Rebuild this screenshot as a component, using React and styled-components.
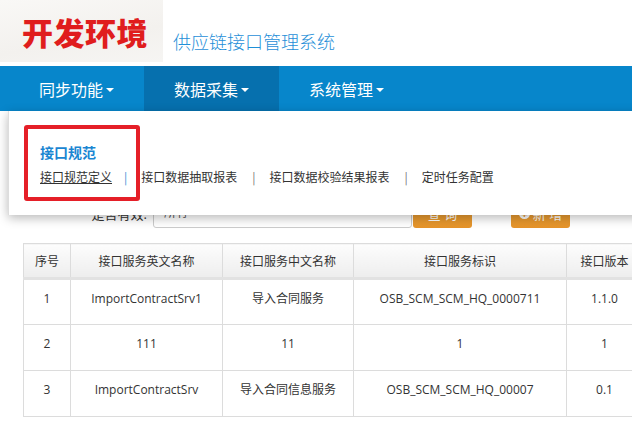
import React from "react";
import styled, { createGlobalStyle, css } from "styled-components";

const GlobalStyle = createGlobalStyle`
	html, body {
		margin: 0;
		padding: 0;
		background: #fff;
		overflow: hidden;
	}
	body {
		font-family: "Open Sans", "Noto Sans CJK SC", sans-serif;
		color: #333;
	}
`;

const navItems = [
	{ label: "同步功能", active: false },
	{ label: "数据采集", active: true },
	{ label: "系统管理", active: false },
];

const subLinks = ["接口规范定义", "接口数据抽取报表", "接口数据校验结果报表", "定时任务配置"];

const columns = [
	{ title: "序号", width: 47 },
	{ title: "接口服务英文名称", width: 152 },
	{ title: "接口服务中文名称", width: 131 },
	{ title: "接口服务标识", width: 213 },
	{ title: "接口版本", width: 76 },
];

const rows = [
	["1", "ImportContractSrv1", "导入合同服务", "OSB_SCM_SCM_HQ_0000711", "1.1.0"],
	["2", "111", "11", "1", "1"],
	["3", "ImportContractSrv", "导入合同信息服务", "OSB_SCM_SCM_HQ_00007", "0.1"],
];

const App = () => {
	return (
		<Page>
			<GlobalStyle />
			<Header>
				<Logo>开发环境</Logo>
				<SubTitle>供应链接口管理系统</SubTitle>
			</Header>
			<NavBar>
				{navItems.map((item) => (
					<NavItem key={item.label} active={item.active}>
						{item.label}
						<Caret />
					</NavItem>
				))}
			</NavBar>

			<Content>
				<SearchRow>
					<Label>是否有效:</Label>
					<Select>所有</Select>
					<OrangeButton>查 询</OrangeButton>
					<OrangeButton gap>
						<PlusIcon>+</PlusIcon>新 增
					</OrangeButton>
				</SearchRow>

				<Table>
					<colgroup>
						{columns.map((c) => (
							<col key={c.title} style={{ width: c.width }} />
						))}
					</colgroup>
					<thead>
						<tr>
							{columns.map((c) => (
								<Th key={c.title}>{c.title}</Th>
							))}
						</tr>
					</thead>
					<tbody>
						{rows.map((r) => (
							<tr key={r[0]}>
								{r.map((cell, idx) => (
									<Td key={idx}>{cell}</Td>
								))}
							</tr>
						))}
					</tbody>
				</Table>
			</Content>

			{/* 下拉菜单 (数据采集) */}
			<DropPanel>
				<GroupTitle>接口规范</GroupTitle>
				<LinkRow>
					{subLinks.map((text, idx) => (
						<React.Fragment key={text}>
							{idx > 0 && <Sep first={idx === 1}>|</Sep>}
							<SubLink current={idx === 0}>{text}</SubLink>
						</React.Fragment>
					))}
				</LinkRow>
			</DropPanel>
			<Highlight />
		</Page>
	);
};

export default App;

const Page = styled.div`
	position: relative;
	width: 632px;
	height: 445px;
	overflow: hidden;
`;

const Header = styled.header`
	height: 66px;
	display: flex;
	align-items: flex-start;
`;

const Logo = styled.div`
	width: 163px;
	height: 62px;
	box-sizing: border-box;
	padding: 12px 0 0 22px;
	background: linear-gradient(170deg, #f9f8f6 0%, #f3f1ee 60%, #f6f5f3 100%);
	color: #e01d1d;
	font-family: "Noto Sans CJK SC", sans-serif;
	font-weight: 900;
	font-size: 31px;
	line-height: 40px;
	letter-spacing: 0.5px;
`;

const SubTitle = styled.div`
	margin: 29px 0 0 10px;
	font-family: "Noto Sans CJK SC", sans-serif;
	font-size: 18px;
	line-height: 24px;
	font-weight: 300;
	color: #1f8fd8;
`;

const NavBar = styled.nav`
	height: 45px;
	background: #0786cb;
	display: flex;
	padding-left: 9px;
`;

const NavItem = styled.div`
	display: flex;
	align-items: center;
	padding: 0 30px;
	color: #fff;
	font-family: "Noto Sans CJK SC", sans-serif;
	font-size: 16px;
	${(props) =>
		props.active &&
		css`
			background: #0670ae;
		`}
`;

const Caret = styled.span`
	margin-left: 3px;
	margin-top: 2px;
	width: 0;
	height: 0;
	border-left: 4px solid transparent;
	border-right: 4px solid transparent;
	border-top: 4px solid #fff;
`;

const Content = styled.div`
	padding: 87px 0 0 23px;
`;

const SearchRow = styled.div`
	display: flex;
	align-items: center;
	height: 30px;
	margin-bottom: 15px;
`;

const Label = styled.span`
	width: 130px;
	padding-right: 6px;
	box-sizing: border-box;
	text-align: right;
	font-size: 13px;
	color: #333;
`;

const Select = styled.div`
	width: 259px;
	height: 30px;
	box-sizing: border-box;
	border: 1px solid #ccc;
	border-radius: 3px;
	padding: 0 10px;
	line-height: 28px;
	font-size: 12px;
	color: #555;
`;

const OrangeButton = styled.div`
	width: 59px;
	height: 30px;
	margin-left: ${(props) => (props.gap ? "39px" : "1px")};
	border-radius: 3px;
	background: linear-gradient(#eea53a, #e6942a);
	color: #fff;
	font-size: 13px;
	display: flex;
	align-items: center;
	justify-content: center;
	gap: 3px;
`;

const PlusIcon = styled.span`
	width: 11px;
	height: 11px;
	border-radius: 50%;
	background: #fff;
	color: #e6942a;
	font-size: 11px;
	line-height: 11px;
	text-align: center;
	font-weight: bold;
`;

const Table = styled.table`
	border-collapse: collapse;
	table-layout: fixed;
	width: 619px;
	font-size: 12px;
	color: #333;
`;

const Th = styled.th`
	height: 33px;
	padding: 0;
	font-weight: normal;
	text-align: center;
	white-space: nowrap;
	background: linear-gradient(#fdfdfd, #ededed);
	border: 1px solid #dcdcdc;
	border-bottom: 3px solid #e2e2e2;
`;

const Td = styled.td`
	height: 46px;
	padding: 9px 0 0;
	box-sizing: border-box;
	vertical-align: top;
	text-align: center;
	line-height: 20px;
	border: 1px solid #dcdcdc;
`;

const DropPanel = styled.div`
	position: absolute;
	left: 8px;
	top: 111px;
	right: -20px;
	height: 104px;
	box-sizing: border-box;
	padding: 31px 0 0 31px;
	background: #fff;
	border-left: 1px solid #ddd;
	box-shadow: 0 3px 10px rgba(0, 0, 0, 0.28);
	font-family: "Noto Sans CJK SC", sans-serif;
`;

const GroupTitle = styled.div`
	font-size: 14px;
	font-weight: bold;
	line-height: 20px;
	color: #1a86d2;
	margin-bottom: 5px;
`;

const LinkRow = styled.div`
	display: flex;
	align-items: center;
	font-size: 12px;
	line-height: 20px;
`;

const SubLink = styled.span`
	color: #333;
	${(props) =>
		props.current &&
		css`
			text-decoration: underline;
			padding-right: 4px;
		`}
`;

const Sep = styled.span`
	color: ${(props) => (props.first ? "#3d8fd3" : "#777")};
	margin: 0 14px 0 ${(props) => (props.first ? "8px" : "15px")};
`;

const Highlight = styled.div`
	position: absolute;
	left: 24px;
	top: 125px;
	width: 116px;
	height: 76px;
	box-sizing: border-box;
	border: 4px solid #e51f28;
	border-radius: 3px;
	pointer-events: none;
`;
